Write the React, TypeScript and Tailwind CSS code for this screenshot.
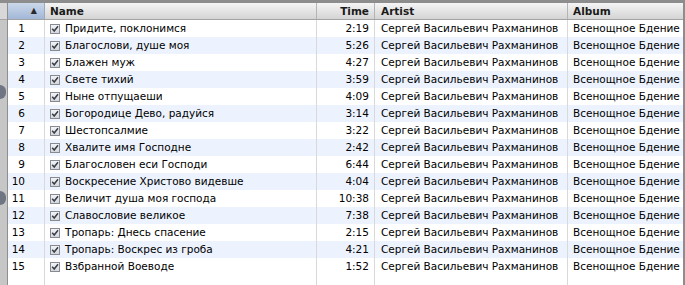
import React from "react";

const rows: [string, string][] = [
  ["Придите, поклонимся", "2:19"],
  ["Благослови, душе моя", "5:26"],
  ["Блажен муж", "4:27"],
  ["Свете тихий", "3:59"],
  ["Ныне отпущаеши", "4:09"],
  ["Богородице Дево, радуйся", "3:14"],
  ["Шестопсалмие", "3:22"],
  ["Хвалите имя Господне", "2:42"],
  ["Благословен еси Господи", "6:44"],
  ["Воскресение Христово видевше", "4:04"],
  ["Величит душа моя господа", "10:38"],
  ["Славословие великое", "7:38"],
  ["Тропарь: Днесь спасение", "2:15"],
  ["Тропарь: Воскрес из гроба", "4:21"],
  ["Взбранной Воеводе", "1:52"],
];

function Check() {
  return (
    <svg width="10" height="10" viewBox="0 0 10 10" className="shrink-0">
      <defs>
        <linearGradient id="cb" x1="0" y1="0" x2="0" y2="1">
          <stop offset="0" stopColor="#f4f6f9" />
          <stop offset="1" stopColor="#d2d6dc" />
        </linearGradient>
      </defs>
      <rect x="0.5" y="0.5" width="9" height="9" fill="url(#cb)" stroke="#878b91" />
      <path d="M2.2 4.8 L4.2 7 L8 2.2" fill="none" stroke="#3a3d44" strokeWidth="1.5" />
    </svg>
  );
}

const grid = "grid grid-cols-[37px_272px_58px_193px_1fr]";

export default function App() {
  return (
    <div
      className="w-[685px] h-[285px] overflow-hidden flex flex-col bg-white text-[10.5px] text-black"
      style={{ fontFamily: '"DejaVu Sans", "Noto Sans", sans-serif' }}
    >
      <div className="h-[3px] bg-[#8d8d8d] shrink-0" />
      <div className="flex flex-1 min-h-0">
        <div className="w-[8px] shrink-0 bg-[#c6c6c6] border-r border-[#8f8f8f] relative">
          <div className="h-[17px] bg-[#d8d8d8] border-b border-[#a5a5a5]" />
          <div className="absolute left-[-6px] top-[82px] w-[12px] h-[14px] rounded-full bg-[#6f7582]" />
          <div className="absolute left-[-6px] top-[188px] w-[12px] h-[14px] rounded-full bg-[#6f7582]" />
        </div>
        <div className="flex-1 flex flex-col min-w-0 border-r-2 border-[#8d8d8d] relative">
          <div className={`${grid} h-[17px] shrink-0 border-b border-[#a3a3a3] bg-gradient-to-b from-[#f5f5f5] to-[#d4d4d4] font-bold text-[#1a1a1a] leading-[16px]`}>
            <div className="bg-gradient-to-b from-[#cbd8ea] to-[#a2b7d7] border-r border-[#9eaab9] flex justify-end items-center pr-[7px]">
              <span className="text-[8px] text-[#2a2a2a]">▲</span>
            </div>
            <div className="border-r border-[#b4b4b4] pl-[5px]">Name</div>
            <div className="border-r border-[#b4b4b4] text-right pr-[5px]">Time</div>
            <div className="border-r border-[#b4b4b4] pl-[6px]">Artist</div>
            <div className="pl-[5px]">Album</div>
          </div>
          {rows.map(([name, time], i) => (
            <div
              key={i}
              className={`${grid} h-[17px] shrink-0 leading-[17px] ${i % 2 === 1 ? "bg-[#edf3fe]" : "bg-white"}`}
            >
              <div className="border-r border-[#d9d9d9] text-right pr-[19px]">{i + 1}</div>
              <div className="border-r border-[#d9d9d9] pl-[5px] flex items-center gap-[5px] whitespace-nowrap overflow-hidden">
                <Check />
                <span>{name}</span>
              </div>
              <div className="border-r border-[#d9d9d9] text-right pr-[5px]">{time}</div>
              <div className="border-r border-[#d9d9d9] pl-[6px] whitespace-nowrap overflow-hidden">Сергей Васильевич Рахманинов</div>
              <div className="pl-[5px] whitespace-nowrap overflow-hidden">Всенощное Бдение</div>
            </div>
          ))}
          <div className={`${grid} flex-1`}>
            <div className="border-r border-[#d9d9d9]" />
            <div className="border-r border-[#d9d9d9]" />
            <div className="border-r border-[#d9d9d9]" />
            <div className="border-r border-[#d9d9d9]" />
            <div />
          </div>
        </div>
      </div>
    </div>
  );
}
